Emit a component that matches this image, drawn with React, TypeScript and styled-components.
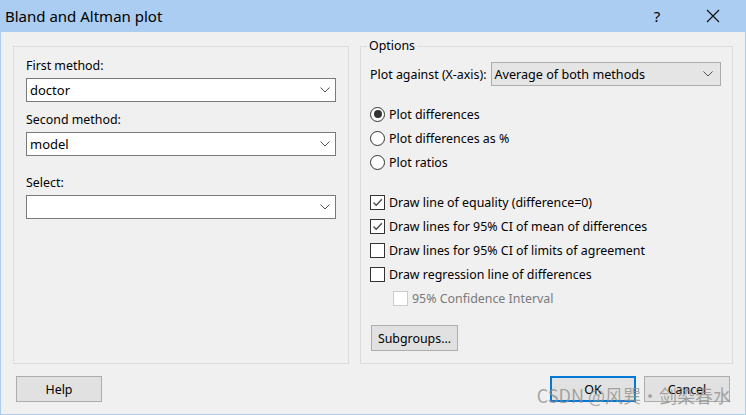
import styled, { createGlobalStyle } from 'styled-components';

const GlobalStyle = createGlobalStyle`
  html, body {
    margin: 0;
    padding: 0;
    background: #f0f0f0;
  }
  * {
    box-sizing: border-box;
  }
`;

const Chevron = () => (
  <svg width="10" height="6" viewBox="0 0 10 6">
    <path d="M0.5 0.5 L5 5 L9.5 0.5" fill="none" stroke="#555" strokeWidth="1" />
  </svg>
);

const Tick = () => (
  <svg width="13" height="13" viewBox="0 0 13 13">
    <path d="M2.5 6.5 L5.2 9.3 L10.8 3.3" fill="none" stroke="#444" strokeWidth="1.3" />
  </svg>
);

const App = () => {
  return (
    <>
      <GlobalStyle />
      <Window>
        <TitleBar>
          <Title>Bland and Altman plot</Title>
          <TitleControls>
            <HelpMark>?</HelpMark>
            <CloseIcon>
              <svg width="14" height="14" viewBox="0 0 14 14">
                <path d="M1 1 L13 13 M13 1 L1 13" stroke="#111" strokeWidth="1.2" />
              </svg>
            </CloseIcon>
          </TitleControls>
        </TitleBar>

        <Body>
          <Panels>
            <LeftPanel>
              <FieldLabel>First method:</FieldLabel>
              <Combo>
                <span>doctor</span>
                <Chevron />
              </Combo>
              <FieldLabel $gap={10}>Second method:</FieldLabel>
              <Combo>
                <span>model</span>
                <Chevron />
              </Combo>
              <FieldLabel $gap={19}>Select:</FieldLabel>
              <Combo>
                <span />
                <Chevron />
              </Combo>
            </LeftPanel>

            <GroupBox>
              <Legend>Options</Legend>
              <AxisRow>
                <span>Plot against (X-axis):</span>
                <GrayCombo>
                  <span>Average of both methods</span>
                  <Chevron />
                </GrayCombo>
              </AxisRow>

              <OptionList $gap={16}>
                <OptionRow>
                  <Radio $checked />
                  <span>Plot differences</span>
                </OptionRow>
                <OptionRow>
                  <Radio />
                  <span>Plot differences as %</span>
                </OptionRow>
                <OptionRow>
                  <Radio />
                  <span>Plot ratios</span>
                </OptionRow>
              </OptionList>

              <OptionList $gap={16}>
                <OptionRow>
                  <Checkbox>
                    <Tick />
                  </Checkbox>
                  <span>Draw line of equality (difference=0)</span>
                </OptionRow>
                <OptionRow>
                  <Checkbox>
                    <Tick />
                  </Checkbox>
                  <span>Draw lines for 95% CI of mean of differences</span>
                </OptionRow>
                <OptionRow>
                  <Checkbox />
                  <span>Draw lines for 95% CI of limits of agreement</span>
                </OptionRow>
                <OptionRow>
                  <Checkbox />
                  <span>Draw regression line of differences</span>
                </OptionRow>
                <OptionRow $indent={23} $disabled>
                  <Checkbox $disabled />
                  <span>95% Confidence Interval</span>
                </OptionRow>
              </OptionList>

              <SubgroupsButton>Subgroups...</SubgroupsButton>
            </GroupBox>
          </Panels>

          <ButtonRow>
            <DialogButton>Help</DialogButton>
            <RightButtons>
              <DialogButton $default>OK</DialogButton>
              <DialogButton>Cancel</DialogButton>
            </RightButtons>
            <Watermark>CSDN @风巽·剑染春水</Watermark>
          </ButtonRow>
        </Body>
      </Window>
    </>
  );
};

const Window = styled.div`
  width: 746px;
  height: 415px;
  display: flex;
  flex-direction: column;
  background: #f0f0f0;
  border: 1px solid #abcdf0;
  border-top: none;
  font-family: 'Noto Sans', 'Open Sans', sans-serif;
  font-size: 12.4px;
  color: #000;
`;

const TitleBar = styled.div`
  height: 32px;
  flex-shrink: 0;
  margin: 0 -1px;
  background: #abcdf1;
  display: flex;
  align-items: center;
  justify-content: space-between;
  padding-left: 5px;
`;

const Title = styled.div`
  font-size: 15px;
  color: #000;
  padding-bottom: 1px;
`;

const TitleControls = styled.div`
  display: flex;
  align-items: center;
`;

const HelpMark = styled.div`
  width: 46px;
  text-align: center;
  font-size: 15px;
  margin-right: 10px;
`;

const CloseIcon = styled.div`
  width: 46px;
  height: 32px;
  display: flex;
  align-items: center;
  justify-content: center;
  margin-right: 10px;
`;

const Body = styled.div`
  flex: 1;
  display: flex;
  flex-direction: column;
  padding: 14px 12px 12px 12px;
`;

const Panels = styled.div`
  display: flex;
  gap: 11px;
  height: 318px;
`;

const LeftPanel = styled.div`
  width: 336px;
  border: 1px solid #dcdcdc;
  display: flex;
  flex-direction: column;
  padding: 11px 12px 0 12px;
`;

const FieldLabel = styled.div<{ $gap?: number }>`
  line-height: 16px;
  margin-top: ${p => p.$gap ?? 0}px;
  margin-bottom: 4px;
`;

const Combo = styled.div`
  height: 24px;
  width: 310px;
  background: #fff;
  border: 1px solid #7a7a7a;
  display: flex;
  align-items: center;
  justify-content: space-between;
  padding: 0 5px 0 3px;
  font-size: 13px;
`;

const GroupBox = styled.div`
  position: relative;
  flex: 1;
  border: 1px solid #dcdcdc;
  padding: 15px 11px 0 9px;
  display: flex;
  flex-direction: column;
`;

const Legend = styled.div`
  position: absolute;
  top: -9px;
  left: 6px;
  padding: 0 2px;
  background: #f0f0f0;
  line-height: 16px;
`;

const AxisRow = styled.div`
  display: flex;
  align-items: center;
  gap: 4px;
`;

const GrayCombo = styled.div`
  flex: 1;
  height: 24px;
  background: #e5e5e5;
  border: 1px solid #adadad;
  display: flex;
  align-items: center;
  justify-content: space-between;
  padding: 0 7px 0 3px;
  font-size: 12.6px;
`;

const OptionList = styled.div<{ $gap: number }>`
  display: flex;
  flex-direction: column;
  margin-top: ${p => p.$gap}px;
`;

const OptionRow = styled.div<{ $indent?: number; $disabled?: boolean }>`
  height: 24px;
  display: flex;
  align-items: center;
  gap: 4px;
  padding-left: ${p => p.$indent ?? 0}px;
  color: ${p => (p.$disabled ? '#7a7a7a' : '#000')};
`;

const Radio = styled.div<{ $checked?: boolean }>`
  width: 15px;
  height: 15px;
  border-radius: 50%;
  border: 1px solid #333;
  background: #fff;
  display: flex;
  align-items: center;
  justify-content: center;

  &::after {
    content: '';
    width: 8px;
    height: 8px;
    border-radius: 50%;
    background: ${p => (p.$checked ? '#333' : 'transparent')};
  }
`;

const Checkbox = styled.div<{ $disabled?: boolean }>`
  width: 15px;
  height: 15px;
  border: 1px solid ${p => (p.$disabled ? '#cccccc' : '#333')};
  background: #fff;
  display: flex;
  align-items: center;
  justify-content: center;
`;

const SubgroupsButton = styled.button`
  margin-top: 15px;
  width: 87px;
  height: 26px;
  background: #e1e1e1;
  border: 1px solid #adadad;
  font-family: inherit;
  font-size: 12.4px;
  color: #000;
  padding: 0;
  align-self: flex-start;
  margin-left: 1px;
`;

const ButtonRow = styled.div`
  position: relative;
  margin-top: 12px;
  display: flex;
  justify-content: space-between;
  padding: 0 3px 0 3px;
`;

const RightButtons = styled.div`
  display: flex;
  gap: 8px;
`;

const DialogButton = styled.button<{ $default?: boolean }>`
  width: 86px;
  height: 26px;
  background: #e1e1e1;
  border: ${p => (p.$default ? '2px solid #0078d7' : '1px solid #adadad')};
  font-family: inherit;
  font-size: 12.4px;
  color: #000;
  padding: 0;
`;

const Watermark = styled.div`
  position: absolute;
  right: 2px;
  top: 6px;
  font-family: 'Noto Sans CJK SC', 'Noto Sans', sans-serif;
  font-size: 18px;
  color: rgba(140, 140, 140, 0.75);
  pointer-events: none;
`;

export default App;
